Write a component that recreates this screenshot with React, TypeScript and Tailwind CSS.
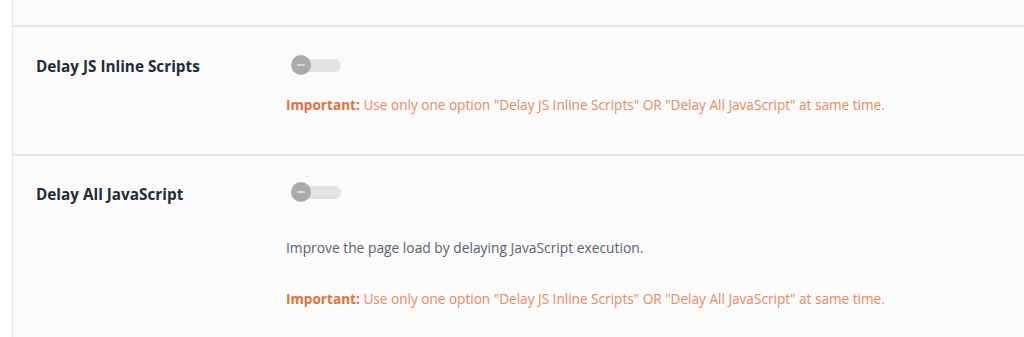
import React from "react";

function Toggle() {
  return (
    <div className="relative ml-[5px] h-[20px] w-[50px] flex items-center">
      <div className="absolute left-[4px] right-0 h-[13px] rounded-full bg-[#e3e3e3]" />
      <div className="relative flex h-[20px] w-[20px] items-center justify-center rounded-full bg-[#ababab]">
        <div className="h-[2px] w-[8px] rounded bg-[#d6d6d6]" />
      </div>
    </div>
  );
}

function Important() {
  return (
    <p className="text-[13.6px] leading-[18px] text-[#e58a64]">
      <span className="font-bold text-[#e2703f]">Important:</span> Use only one option "Delay JS Inline Scripts" OR "Delay All JavaScript" at same time.
    </p>
  );
}

export default function App() {
  return (
    <div
      className="h-[337px] w-[1024px] overflow-hidden bg-white pl-[12px]"
      style={{ fontFamily: "'Open Sans', sans-serif" }}
    >
      <div className="h-full border-l-[1.5px] border-[#e4e4e4] bg-[#fbfbfb]">
        <div className="h-[27px] border-b-2 border-[#e6e6e6]" />
        <div className="flex h-[129px] border-b-2 border-[#e6e6e6]">
          <div className="w-[273px] shrink-0 pl-[23px] pt-[29px]">
            <h3 className="text-[15.3px] font-bold leading-[20px] text-[#1f2b38]">Delay JS Inline Scripts</h3>
          </div>
          <div className="flex flex-col pt-[28px]">
            <Toggle />
            <div className="mt-[21px]">
              <Important />
            </div>
          </div>
        </div>
        <div className="flex">
          <div className="w-[273px] shrink-0 pl-[23px] pt-[28px]">
            <h3 className="text-[15.3px] font-bold leading-[20px] text-[#1f2b38]">Delay All JavaScript</h3>
          </div>
          <div className="flex flex-col pt-[26px]">
            <Toggle />
            <p className="mt-[37px] text-[13.8px] leading-[18px] text-[#59626e]">Improve the page load by delaying JavaScript execution.</p>
            <div className="mt-[33px]">
              <Important />
            </div>
          </div>
        </div>
      </div>
    </div>
  );
}
